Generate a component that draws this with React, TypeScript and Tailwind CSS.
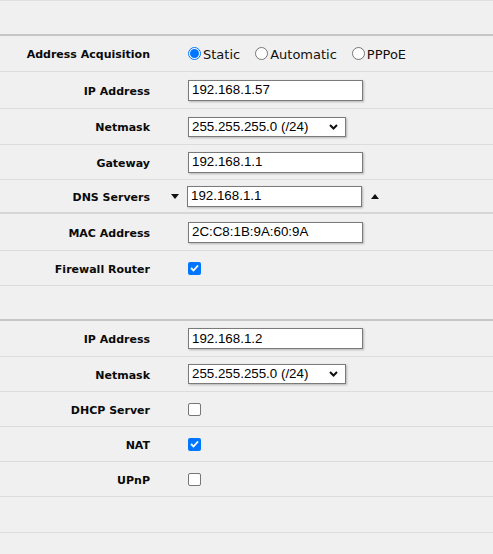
import React from "react";

const labelFont = { fontFamily: '"DejaVu Sans", Verdana, sans-serif' };

function Label({ children }: { children?: React.ReactNode }) {
  return (
    <div
      className="w-[150px] shrink-0 text-right font-bold text-[11px] text-[#0a0a0a] pt-[4px]"
      style={labelFont}
    >
      {children}
    </div>
  );
}

function Row({
  label,
  children,
  h,
  extra = "border-b border-[#dcdcdc]",
}: {
  label?: string;
  children?: React.ReactNode;
  h: string;
  extra?: string;
}) {
  return (
    <div className={`flex items-center ${h} ${extra}`}>
      <Label>{label}</Label>
      <div className="ml-[38px] flex items-center">{children}</div>
    </div>
  );
}

function TextBox({ value, w = "w-[175px]" }: { value: string; w?: string }) {
  return (
    <div
      className={`${w} h-[21px] bg-white border border-[#7a7a7a] shadow-[1px_1px_2px_rgba(0,0,0,0.25)] flex items-center pl-[3px] text-[13.33px] text-black font-['Liberation_Sans',Arial,sans-serif]`}
    >
      {value}
    </div>
  );
}

function Select({ value }: { value: string }) {
  return (
    <div className="w-[158px] h-[20px] bg-white border border-[#7a7a7a] shadow-[1px_1px_2px_rgba(0,0,0,0.25)] flex items-center pl-[3px] pr-[7px] text-[13.33px] text-black font-['Liberation_Sans',Arial,sans-serif]">
      <span className="flex-1">{value}</span>
      <svg width="9" height="6" viewBox="0 0 9 6">
        <path d="M1 1 L4.5 4.5 L8 1" fill="none" stroke="#111" strokeWidth="2" />
      </svg>
    </div>
  );
}

function Check({ checked }: { checked?: boolean }) {
  return checked ? (
    <div className="w-[13px] h-[13px] rounded-[2px] bg-[#0075ff] flex items-center justify-center">
      <svg width="9" height="8" viewBox="0 0 9 8">
        <path d="M1 4 L3.5 6.5 L8 1.5" fill="none" stroke="white" strokeWidth="1.8" />
      </svg>
    </div>
  ) : (
    <div className="w-[13px] h-[13px] rounded-[2px] bg-white border border-[#767676]" />
  );
}

function Radio({ checked, label }: { checked?: boolean; label: string }) {
  return (
    <div className="flex items-center">
      {checked ? (
        <div className="w-[13px] h-[13px] rounded-full border border-[#0075ff] bg-white flex items-center justify-center">
          <div className="w-[9px] h-[9px] rounded-full bg-[#0075ff]" />
        </div>
      ) : (
        <div className="w-[13px] h-[13px] rounded-full border border-[#767676] bg-white" />
      )}
      <span className="ml-[2px] pt-[2px] text-[13px] text-[#111]" style={labelFont}>
        {label}
      </span>
    </div>
  );
}

export default function App() {
  return (
    <div className="w-[493px] h-[554px] bg-[#f0f0f0] overflow-hidden">
      <div className="h-[36px] border-t border-[#e0e0e0] border-b-2 border-b-[#c6c6c6]" />
      <Row label="Address Acquisition" h="h-[36px]">
        <div className="flex items-center gap-[15px]">
          <Radio checked label="Static" />
          <Radio label="Automatic" />
          <Radio label="PPPoE" />
        </div>
      </Row>
      <Row label="IP Address" h="h-[37px]">
        <TextBox value="192.168.1.57" />
      </Row>
      <Row label="Netmask" h="h-[36px]">
        <Select value="255.255.255.0 (/24)" />
      </Row>
      <Row label="Gateway" h="h-[35px]">
        <TextBox value="192.168.1.1" />
      </Row>
      <div className="flex items-center h-[34px] border-b-2 border-[#d6d6d6]">
        <Label>DNS Servers</Label>
        <div className="ml-[21px] flex items-center">
          <svg width="8" height="5" viewBox="0 0 8 5" className="mr-[8px]">
            <path d="M0 0 H8 L4 5 Z" fill="#111" />
          </svg>
          <TextBox value="192.168.1.1" />
          <svg width="8" height="5" viewBox="0 0 8 5" className="ml-[9px]">
            <path d="M0 5 H8 L4 0 Z" fill="#111" />
          </svg>
        </div>
      </div>
      <Row label="MAC Address" h="h-[37px]">
        <TextBox value="2C:C8:1B:9A:60:9A" />
      </Row>
      <Row label="Firewall Router" h="h-[35px]">
        <Check checked />
      </Row>
      <div className="h-[35px] border-b-2 border-[#c6c6c6]" />
      <Row label="IP Address" h="h-[36px]">
        <TextBox value="192.168.1.2" />
      </Row>
      <Row label="Netmask" h="h-[35px]">
        <Select value="255.255.255.0 (/24)" />
      </Row>
      <Row label="DHCP Server" h="h-[35px]">
        <Check />
      </Row>
      <Row label="NAT" h="h-[35px]">
        <Check checked />
      </Row>
      <Row label="UPnP" h="h-[35px]">
        <Check />
      </Row>
      <div className="h-[36px] border-b border-[#dcdcdc]" />
    </div>
  );
}
